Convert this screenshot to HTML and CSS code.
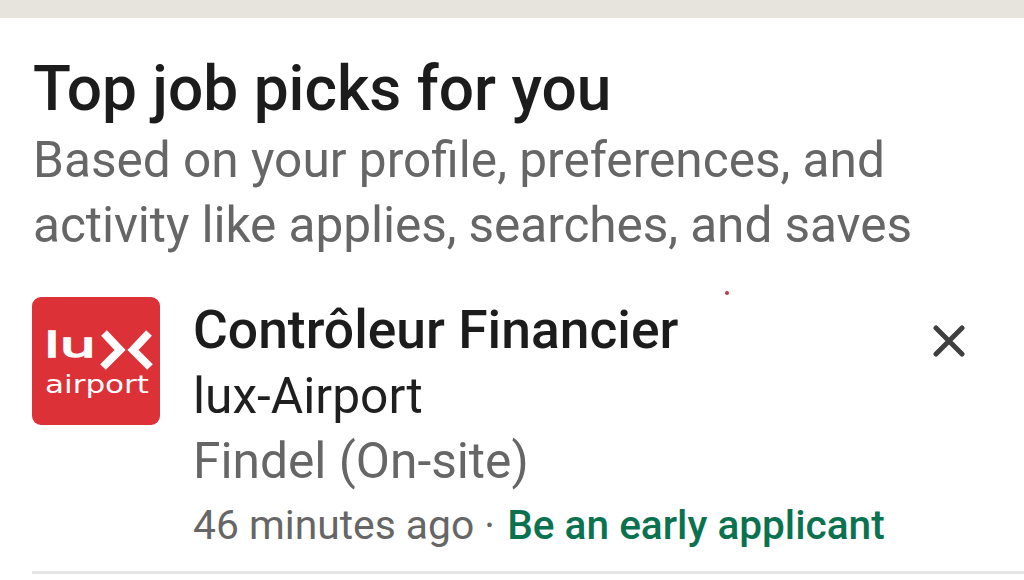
FILE: index.html
```html
<!DOCTYPE html>
<html lang="en">
<head>
<meta charset="utf-8">
<title>Top job picks for you</title>
<link rel="stylesheet" href="styles.css">
</head>
<body>
<div class="band"></div>
<main class="card">
  <header class="head">
    <h1 class="title">Top job picks for you</h1>
    <p class="sub">Based on your profile, preferences, and<br><span class="sub-second">activity like applies, searches, and saves</span></p>
  </header>
  <article class="job">
    <svg class="logo" viewBox="0 0 128 128" role="img" aria-label="lux airport">
      <rect width="128" height="128" rx="9" fill="#dd3138"/>
      <text class="logo-lu" x="12" y="60" textLength="52" lengthAdjust="spacingAndGlyphs">lu</text>
      <polyline points="72,36 88,53 71,70" class="logo-x"/>
      <polyline points="117,36 101,53 118,70" class="logo-x"/>
      <text class="logo-air" x="13" y="96" textLength="104" lengthAdjust="spacingAndGlyphs">airport</text>
    </svg>
    <div class="info">
      <div class="job-title">Contrôleur Financier</div>
      <div class="company">lux-Airport</div>
      <div class="place">Findel (On-site)</div>
      <div class="meta">46 minutes ago <span class="dot">·</span> <span class="early">Be an early applicant</span></div>
    </div>
    <svg class="close" viewBox="0 0 32 32" aria-label="Dismiss"><path d="M3 3 L29 29 M29 3 L3 29"/></svg>
    <span class="speck"></span>
  </article>
  <div class="rule"></div>
</main>
</body>
</html>
```
FILE: styles.css
```css
* { box-sizing: border-box; }
html, body { margin: 0; padding: 0; }
body {
  width: 1024px;
  height: 580px;
  overflow: hidden;
  background: #fff;
  font-family: Roboto, "Liberation Sans", sans-serif;
}
.band { height: 18px; background: #e7e4dd; }
.card { padding: 0 0 0 32px; }
.head { padding: 35px 0 0 1px; }
.title {
  margin: 0 0 3px;
  font-size: 62.2px;
  line-height: 72px;
  font-weight: 500;
  color: #1c1c1c;
}
.sub {
  margin: 0;
  font-size: 49.6px;
  line-height: 65px;
  font-weight: 400;
  color: #666;
}
.sub-second { letter-spacing: -0.08px; }
.job { position: relative; display: flex; align-items: flex-start; margin-top: 39px; }
.logo { width: 128px; height: 128px; flex: none; }
.logo-lu { font-family: "DejaVu Sans", sans-serif; font-size: 33px; fill: #fff; stroke: #fff; stroke-width: 1.4; }
.logo-x { fill: none; stroke: #fff; stroke-width: 8; }
.logo-air { font-family: "DejaVu Sans", sans-serif; font-size: 24px; fill: #fff; }
.info { margin-left: 33px; flex: none; }
.job-title { font-size: 53.4px; line-height: 65px; font-weight: 500; color: #1c1c1c; }
.company { font-size: 49.7px; line-height: 66px; padding-top: 1px; color: #1f1f1f; }
.place { font-size: 49.7px; line-height: 64px; color: #666; }
.meta { font-size: 40.8px; line-height: 65px; color: #666; }
.early { margin-left: 2px; font-size: 40.6px; font-weight: 500; color: #0b7250; }
.close {
  position: absolute;
  left: 901px;
  top: 28px;
  width: 32px;
  height: 32px;
  fill: none;
  stroke: #3f3f3f;
  stroke-width: 5;
  stroke-linecap: round;
}
.speck {
  position: absolute;
  left: 693px;
  top: -6px;
  width: 4px;
  height: 4px;
  border-radius: 50%;
  background: #c0394b;
}
.rule { height: 3px; background: #e6e6e6; margin-top: 13px; }
```
